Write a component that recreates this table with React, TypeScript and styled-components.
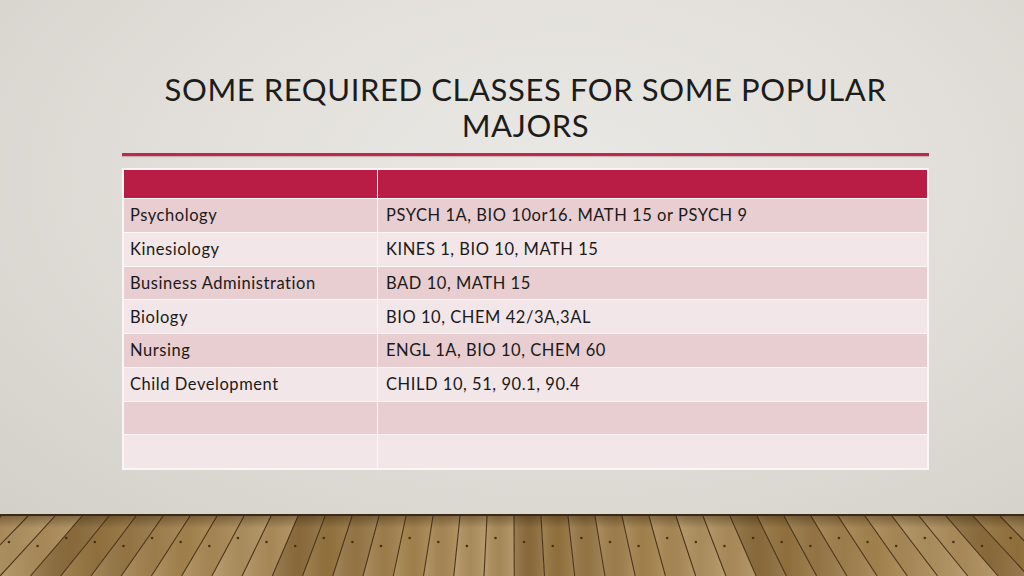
import React from "react";
import styled, { createGlobalStyle } from "styled-components";

const GlobalStyle = createGlobalStyle`
  html, body { margin: 0; padding: 0; }
  body { width: 1024px; height: 576px; overflow: hidden; font-family: "Lato", "Open Sans", sans-serif; }
`;

const Slide = styled.div`
  width: 1024px;
  height: 576px;
  display: flex;
  flex-direction: column;
`;

const Wall = styled.div`
  flex: 1;
  background: radial-gradient(ellipse at 55% 35%, #e9e8e4 0%, #e3e0db 45%, #d3cfc9 100%);
  padding: 71px 95px 0 122px;
`;

const Title = styled.h1`
  margin: 0;
  width: 807px;
  text-align: center;
  font-family: "Lato", sans-serif;
  font-weight: 400;
  font-size: 31px;
  line-height: 36px;
  color: #1c1c1c;
  letter-spacing: 0.6px;
`;

const Rule = styled.div`
  width: 807px;
  height: 3px;
  background: #c0284b;
  margin-top: 10px;
  box-shadow: 0 1px 1px rgba(120, 20, 40, 0.25);
`;

const Table = styled.table`
  margin-top: 12px;
  width: 807px;
  border-collapse: collapse;
  border: 2px solid #fbf6f6;
  table-layout: fixed;
`;

const HeadCell = styled.th<{ $w?: number }>`
  height: 28px;
  padding: 0;
  background: #b91d46;
  border: 1px solid #fbf6f6;
  ${(p) => (p.$w ? `width: ${p.$w}px;` : "")}
`;

const Row = styled.tr<{ $odd: boolean }>`
  background: ${(p) => (p.$odd ? "#e8cdd1" : "#f3e6e8")};
`;

const Cell = styled.td<{ $pad: number }>`
  height: 32.75px;
  padding: 0 0 0 ${(p) => p.$pad}px;
  border: 1px solid #fbf6f6;
  font-family: "Lato", sans-serif;
  font-size: 16.5px;
  letter-spacing: 0.55px;
  color: #1a1a1a;
  vertical-align: middle;
  white-space: nowrap;
`;

const Floor = styled.div`
  height: 60px;
  border-top: 2px solid #3b2a17;
`;

const rows: [string, string][] = [
  ["Psychology", "PSYCH 1A, BIO 10or16. MATH 15 or PSYCH 9"],
  ["Kinesiology", "KINES 1, BIO 10, MATH 15"],
  ["Business Administration", "BAD 10, MATH 15"],
  ["Biology", "BIO 10, CHEM 42/3A,3AL"],
  ["Nursing", "ENGL 1A, BIO 10, CHEM 60"],
  ["Child Development", "CHILD 10, 51, 90.1, 90.4"],
  ["", ""],
  ["", ""],
];

const plankColors = ["#9a7a48", "#ad8c58", "#8f6f3e", "#a4834f", "#b39462", "#977640", "#a88750", "#b0905d"];

const WoodFloor: React.FC = () => {
  const cx = 512;
  const k = 1.12;
  const h = 60;
  const tops: number[] = [];
  for (let x = -80; x <= 1110; x += 27) tops.push(x);
  const bx = (x: number) => cx + (x - cx) * k;
  return (
    <svg width="1024" height={h} viewBox={`0 0 1024 ${h}`} style={{ display: "block" }}>
      <defs>
        <linearGradient id="shade" x1="0" y1="0" x2="0" y2="1">
          <stop offset="0" stopColor="#2a1a08" stopOpacity="0.35" />
          <stop offset="0.2" stopColor="#2a1a08" stopOpacity="0" />
        </linearGradient>
        <linearGradient id="grain" x1="0" y1="0" x2="1" y2="0">
          <stop offset="0" stopColor="#fff" stopOpacity="0.12" />
          <stop offset="0.5" stopColor="#000" stopOpacity="0.06" />
          <stop offset="1" stopColor="#fff" stopOpacity="0.1" />
        </linearGradient>
      </defs>
      {tops.slice(0, -1).map((x, i) => {
        const x2 = tops[i + 1];
        const pts = `${x},0 ${x2},0 ${bx(x2)},${h} ${bx(x)},${h}`;
        return (
          <g key={i}>
            <polygon points={pts} fill={plankColors[(i * 3) % plankColors.length]} />
            <polygon points={pts} fill="url(#grain)" />
          </g>
        );
      })}
      {tops.map((x, i) => (
        <line key={`l${i}`} x1={x} y1={0} x2={bx(x)} y2={h} stroke="#4a3319" strokeWidth="1.1" />
      ))}
      {tops.map((x, i) => (
        <circle key={`n${i}`} cx={(x + bx(x)) / 2 + 10} cy={22 + (i % 3) * 4} r="1.3" fill="#4a3014" />
      ))}
      <rect x="0" y="0" width="1024" height={h} fill="url(#shade)" />
    </svg>
  );
};

export default function App() {
  return (
    <Slide>
      <GlobalStyle />
      <Wall>
        <Title>
          SOME REQUIRED CLASSES FOR SOME POPULAR
          <br />
          MAJORS
        </Title>
        <Rule />
        <Table>
          <thead>
            <tr>
              <HeadCell $w={253} />
              <HeadCell />
            </tr>
          </thead>
          <tbody>
            {rows.map(([major, classes], i) => (
              <Row key={i} $odd={i % 2 === 0}>
                <Cell $pad={6}>{major}</Cell>
                <Cell $pad={8}>{classes}</Cell>
              </Row>
            ))}
          </tbody>
        </Table>
      </Wall>
      <Floor>
        <WoodFloor />
      </Floor>
    </Slide>
  );
}
